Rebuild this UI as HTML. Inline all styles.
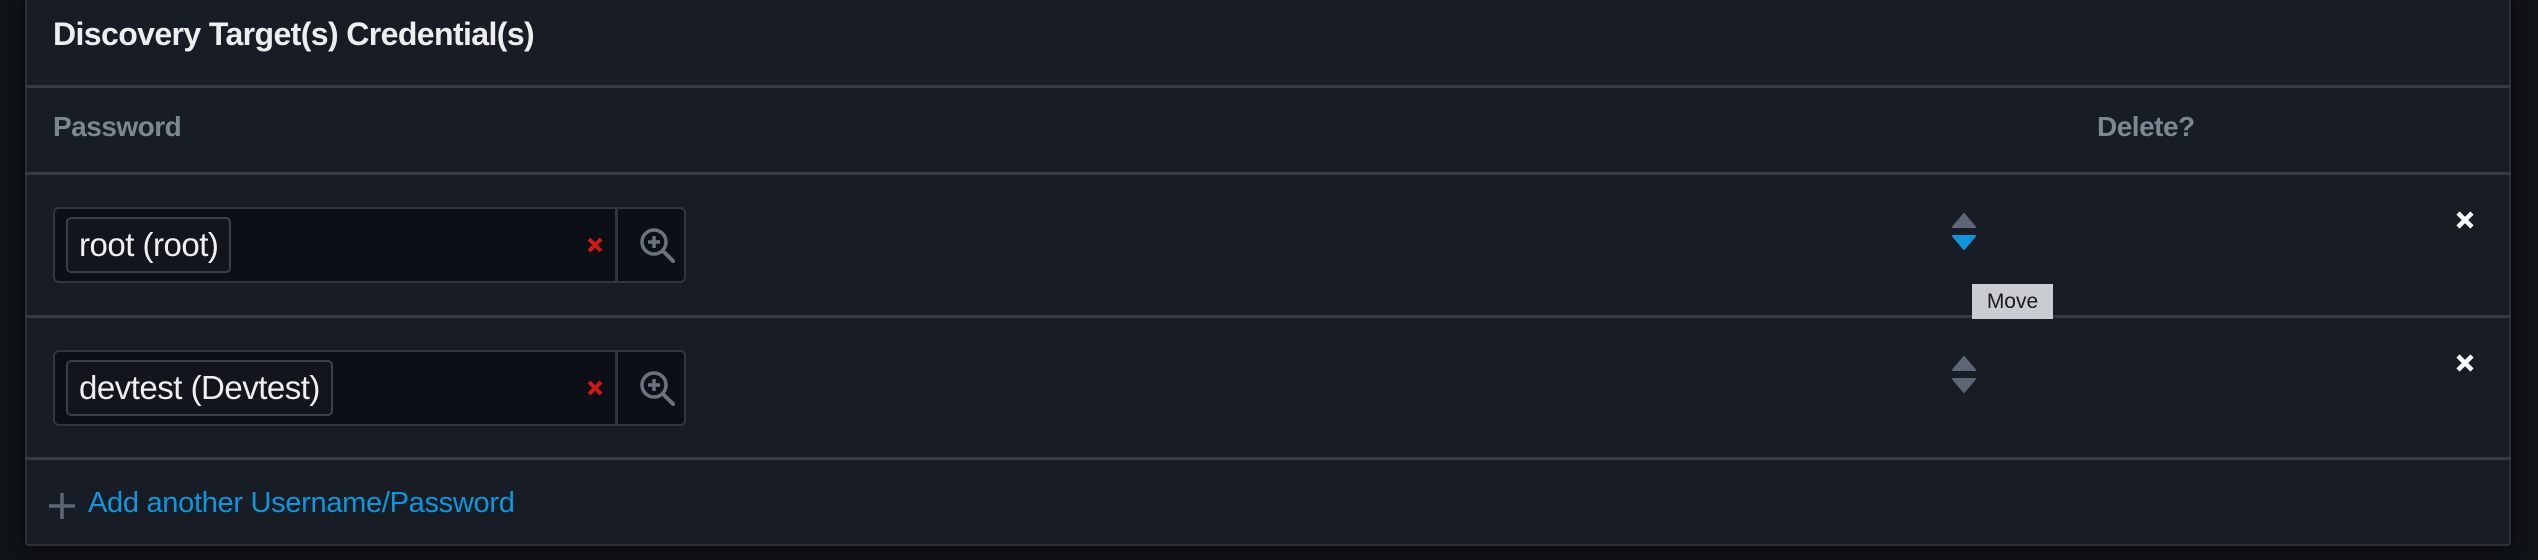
<!DOCTYPE html>
<html><head><meta charset="utf-8"><style>
*{margin:0;padding:0;box-sizing:border-box}
body{width:2538px;height:560px;background:#0f1217;overflow:hidden;font-family:"Liberation Sans",sans-serif;position:relative}
.panel{position:absolute;left:25px;top:-4px;width:2486px;height:550px;background:#181c24;border:2px solid #2a2f38;border-radius:4px;box-shadow:0 0 12px rgba(0,0,0,.6)}
.abs{position:absolute}
.hr{position:absolute;left:25px;width:2486px;height:3px;background:#353a43}
.title{left:53px;top:16px;font-size:32px;font-weight:bold;color:#eceef0;letter-spacing:-0.6px}
.lbl{font-size:28px;font-weight:bold;color:#7b8791;letter-spacing:-0.5px}
.box{position:absolute;left:53px;width:633px;height:76px;background:#0c0f15;border:2px solid #30353e;border-radius:6px}
.sep{position:absolute;left:560px;top:0;width:3px;height:72px;background:#30353e}
.chip{position:absolute;left:11px;top:8px;height:56px;border:2px solid #3a3f48;border-radius:5px;background:#12151b;color:#eef0f2;font-size:33px;line-height:52px;padding:0 11px;letter-spacing:-0.5px}
.link{left:88px;top:487px;font-size:29px;color:#0f96dc;letter-spacing:-0.3px}
.tip{left:1972px;top:284px;width:81px;height:35px;background:#c9ccd0;color:#1a1a1a;font-size:21px;line-height:35px;text-align:center}
</style></head><body>
<div class="panel"></div>
<div class="abs title">Discovery Target(s) Credential(s)</div>
<div class="hr" style="top:85px"></div>
<div class="abs lbl" style="left:53px;top:111px">Password</div>
<div class="abs lbl" style="left:2097px;top:111px">Delete?</div>
<div class="hr" style="top:172px"></div>

<div class="box" style="top:207px"><div class="chip">root (root)</div><div class="sep"></div>
<svg class="abs" style="left:530px;top:26px" width="20" height="20" viewBox="0 0 20 20"><path d="M4 4L16 16M16 4L4 16" stroke="#d01818" stroke-width="4"/></svg>
<svg class="abs" style="left:582px;top:16px" width="44" height="44" viewBox="0 0 44 44"><circle cx="17" cy="17" r="12" fill="none" stroke="#6b7380" stroke-width="3.5"/><path d="M17 11v12M11 17h12" stroke="#6b7380" stroke-width="3.5"/><path d="M26 26l10 10" stroke="#6b7380" stroke-width="4" stroke-linecap="round"/></svg></div>

<svg class="abs" style="left:1952px;top:213px" width="24" height="37" viewBox="0 0 24 37"><path d="M12 1L23 14H1Z" fill="#5c6677" stroke="#5c6677" stroke-linejoin="round" stroke-width="2"/><path d="M1 23H23L12 36Z" fill="#0f96dc" stroke="#0f96dc" stroke-linejoin="round" stroke-width="2"/></svg>
<svg class="abs" style="left:2454px;top:209px" width="22" height="22" viewBox="0 0 22 22"><path d="M4 4L18 18M18 4L4 18" stroke="#fff" stroke-width="4.5"/></svg>
<div class="hr" style="top:315px"></div>
<div class="abs tip">Move</div>

<div class="box" style="top:350px"><div class="chip">devtest (Devtest)</div><div class="sep"></div>
<svg class="abs" style="left:530px;top:26px" width="20" height="20" viewBox="0 0 20 20"><path d="M4 4L16 16M16 4L4 16" stroke="#d01818" stroke-width="4"/></svg>
<svg class="abs" style="left:582px;top:16px" width="44" height="44" viewBox="0 0 44 44"><circle cx="17" cy="17" r="12" fill="none" stroke="#6b7380" stroke-width="3.5"/><path d="M17 11v12M11 17h12" stroke="#6b7380" stroke-width="3.5"/><path d="M26 26l10 10" stroke="#6b7380" stroke-width="4" stroke-linecap="round"/></svg></div>

<svg class="abs" style="left:1952px;top:356px" width="24" height="37" viewBox="0 0 24 37"><path d="M12 1L23 14H1Z" fill="#5c6677" stroke="#5c6677" stroke-linejoin="round" stroke-width="2"/><path d="M1 23H23L12 36Z" fill="#5c6677" stroke="#5c6677" stroke-linejoin="round" stroke-width="2"/></svg>
<svg class="abs" style="left:2454px;top:352px" width="22" height="22" viewBox="0 0 22 22"><path d="M4 4L18 18M18 4L4 18" stroke="#fff" stroke-width="4.5"/></svg>
<div class="hr" style="top:457px"></div>

<svg class="abs" style="left:47px;top:491px" width="30" height="30" viewBox="0 0 30 30"><path d="M15 2V28M2 15H28" stroke="#5c6677" stroke-width="3.5"/></svg>
<div class="abs link">Add another Username/Password</div>
</body></html>
